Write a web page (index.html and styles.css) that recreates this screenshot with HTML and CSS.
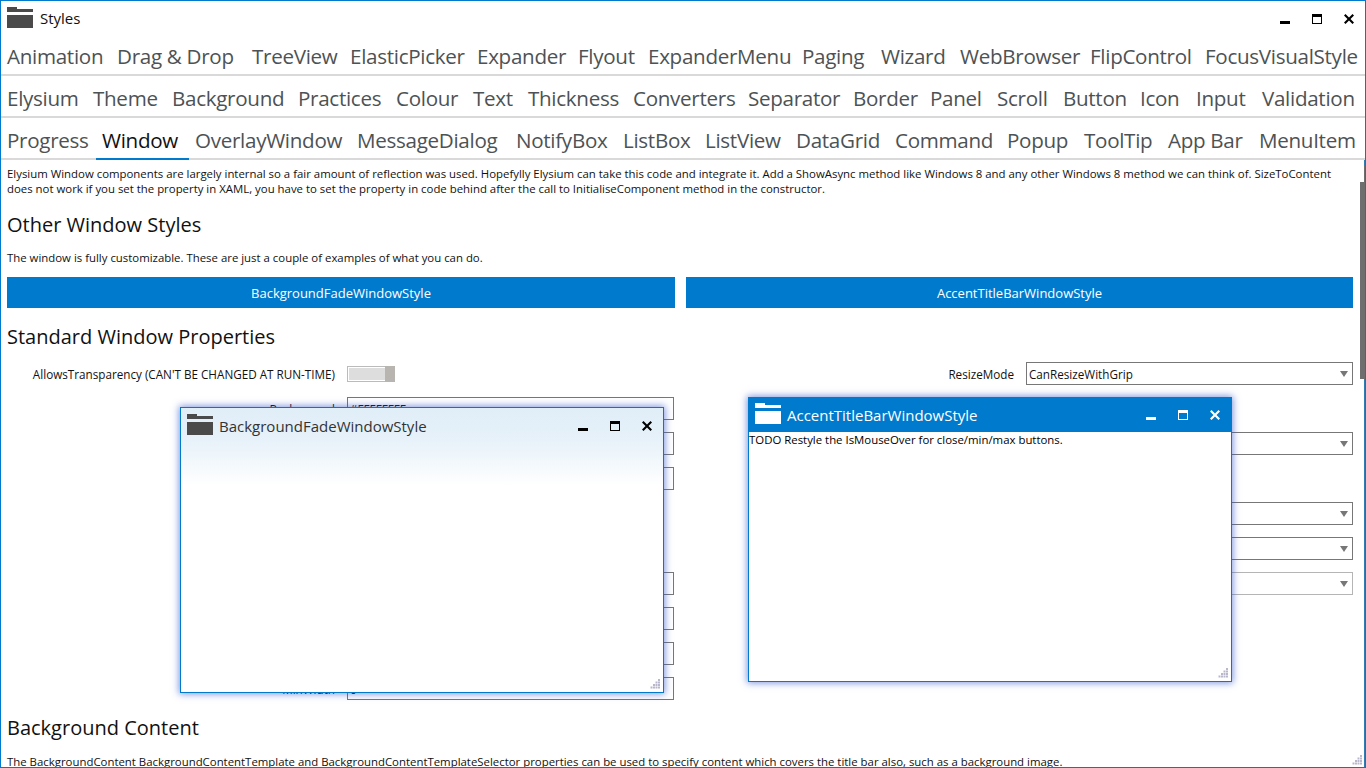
FILE: index.html
```html
<!DOCTYPE html>
<html lang="en">
  <head>
    <meta charset="utf-8">
    <title>Styles</title>
    <link rel="stylesheet" href="styles.css">
  </head>
  <body>
    <svg class="defs">
      <symbol id="folder" viewBox="0 0 26 21"><path d="M0 0h10v2h16v3H0zM0 8h26v13H0z"/></symbol>
      <symbol id="min" viewBox="0 0 10 10"><path d="M0 7h10v3H0z"/></symbol>
      <symbol id="max" viewBox="0 0 10 10"><path d="M0 0h10v10H0zM1 3v6h8V3z" fill-rule="evenodd"/></symbol>
      <symbol id="close" viewBox="0 0 10 10"><path d="M0 1.500L1.500 0 5 3.500 8.500 0 10 1.500 6.500 5 10 8.500 8.500 10 5 6.500 1.500 10 0 8.500 3.500 5z"/></symbol>
      <symbol id="grip" viewBox="0 0 10 10"><path d="M8 0h2v2H8zM8 2.500h2v2H8zM5.500 2.500h2v2h-2zM8 5h2v2H8zM5.500 5h2v2h-2zM3 5h2v2H3zM8 7.500h2v2H8zM5.500 7.500h2v2h-2zM3 7.500h2v2H3zM.5 7.500h2v2h-2z"/></symbol>
    </svg>

    <div class="app">
      <div class="titlebar">
        <svg class="folder"><use href="#folder"/></svg>
        <span class="title">Styles</span>
        <div class="winbtns">
          <svg><use href="#min"/></svg>
          <svg><use href="#max"/></svg>
          <svg><use href="#close"/></svg>
        </div>
      </div>

      <div class="tabs tabs1">
        <a>Animation</a><a>Drag &amp; Drop</a><a>TreeView</a><a>ElasticPicker</a><a>Expander</a><a>Flyout</a><a>ExpanderMenu</a><a>Paging</a><a>Wizard</a><a>WebBrowser</a><a>FlipControl</a><a>FocusVisualStyle</a>
      </div>
      <div class="tabs tabs2">
        <a>Elysium</a><a>Theme</a><a>Background</a><a>Practices</a><a>Colour</a><a>Text</a><a>Thickness</a><a>Converters</a><a>Separator</a><a>Border</a><a>Panel</a><a>Scroll</a><a>Button</a><a>Icon</a><a>Input</a><a>Validation</a>
      </div>
      <div class="tabs tabs3">
        <a>Progress</a><a class="active">Window</a><a>OverlayWindow</a><a>MessageDialog</a><a>NotifyBox</a><a>ListBox</a><a>ListView</a><a>DataGrid</a><a>Command</a><a>Popup</a><a>ToolTip</a><a>App Bar</a><a>MenuItem</a>
      </div>

      <div class="main">
        <div class="content">
          <p class="intro">Elysium Window components are largely internal so a fair amount of reflection was used. Hopefylly Elysium can take this code and integrate it. Add a ShowAsync method like Windows 8 and any other Windows 8 method we can think of. SizeToContent does not work if you set the property in XAML, you have to set the property in code behind after the call to InitialiseComponent method in the constructor.</p>

          <h2>Other Window Styles</h2>
          <p class="line">The window is fully customizable. These are just a couple of examples of what you can do.</p>
          <div class="btnrow">
            <button>BackgroundFadeWindowStyle</button>
            <button>AccentTitleBarWindowStyle</button>
          </div>

          <h2 class="props">Standard Window Properties</h2>
          <div class="form">
            <div class="col">
              <div class="row"><label>AllowsTransparency (CAN'T BE CHANGED AT RUN-TIME)</label><div class="toggle"><span class="thumb"></span></div></div>
              <div class="row"><label>Background</label><div class="box">#FFFFFFFF</div></div>
              <div class="row"><label></label><div class="box"></div></div>
              <div class="row"><label></label><div class="box"></div></div>
              <div class="row"></div>
              <div class="row"></div>
              <div class="row"><label></label><div class="box"></div></div>
              <div class="row"><label></label><div class="box"></div></div>
              <div class="row"><label></label><div class="box"></div></div>
              <div class="row"><label>MinWidth</label><div class="box">0</div></div>
            </div>
            <div class="col">
              <div class="row"><label>ResizeMode</label><div class="box select">CanResizeWithGrip</div></div>
              <div class="row"></div>
              <div class="row"><label></label><div class="box select"></div></div>
              <div class="row"></div>
              <div class="row"><label></label><div class="box select"></div></div>
              <div class="row"><label></label><div class="box select"></div></div>
              <div class="row"><label></label><div class="box select off"></div></div>
            </div>
          </div>

          <h2 class="bg">Background Content</h2>
          <p class="line last">The BackgroundContent BackgroundContentTemplate and BackgroundContentTemplateSelector properties can be used to specify content which covers the title bar also, such as a background image.</p>
        </div>
        <div class="scrollbar"><span class="sthumb"></span></div>
      </div>

      <svg class="grip maingrip"><use href="#grip"/></svg>

      <!-- floating demo windows -->
      <div class="win fade">
        <div class="wintitle">
          <svg class="folder"><use href="#folder"/></svg>
          <span>BackgroundFadeWindowStyle</span>
          <div class="winbtns">
            <svg><use href="#min"/></svg>
            <svg><use href="#max"/></svg>
            <svg><use href="#close"/></svg>
          </div>
        </div>
        <svg class="grip"><use href="#grip"/></svg>
      </div>

      <div class="win accent">
        <div class="wintitle">
          <svg class="folder"><use href="#folder"/></svg>
          <span>AccentTitleBarWindowStyle</span>
          <div class="winbtns">
            <svg><use href="#min"/></svg>
            <svg><use href="#max"/></svg>
            <svg><use href="#close"/></svg>
          </div>
        </div>
        <p class="todo">TODO Restyle the IsMouseOver for close/min/max buttons.</p>
        <svg class="grip"><use href="#grip"/></svg>
      </div>
    </div>
  </body>
</html>
```

FILE: styles.css
```css
* {
  box-sizing: border-box;
}

html, body {
  margin: 0;
  height: 100%;
  overflow: hidden;
}

body {
  font-family: "Open Sans", "Noto Sans", sans-serif;
  font-size: 11.4px;
  color: #111;
  background: #fff;
}

.defs {
  display: none;
}

.app {
  position: relative;
  height: 768px;
  border: 1px solid #007acc;
  display: flex;
  flex-direction: column;
  overflow: hidden;
}

/* title bar */
.titlebar {
  height: 35px;
  flex: none;
  display: flex;
  align-items: center;
  padding: 0 11px 0 6px;
}

.folder {
  width: 26px;
  height: 21px;
  fill: #4a4a4a;
  margin-top: -2px;
}

.title {
  margin-left: 7px;
  font-size: 15px;
  margin-top: -1px;
}

.winbtns {
  margin-left: auto;
  display: flex;
  gap: 22px;
  fill: #000;
}

.winbtns svg {
  width: 10px;
  height: 10px;
}

/* tab rows */
.tabs {
  height: 42px;
  flex: none;
  display: grid;
  padding-left: 6px;
  border-bottom: 2px solid #d9d9d9;
  font-size: 20.6px;
  letter-spacing: -0.3px;
  color: #4d5254;
  white-space: nowrap;
}

.tabs1 {
  height: 40px;
  grid-template-columns: 110px 135px 98px 127px 101px 70px 154px 79px 79px 130px 115px 151px;
}

.tabs2 {
  grid-template-columns: 86px 79px 126px 98px 77px 55px 105px 115px 105px 77px 67px 66px 77px 56px 66px 90px;
}

.tabs3 {
  grid-template-columns: 95px 93px 162px 159px 107px 82px 91px 99px 112px 77px 84px 91px 100px;
}

.tabs a {
  line-height: 44px;
  height: 42px;
}

.tabs1 a {
  line-height: 40px;
  height: 40px;
}

.tabs a.active {
  color: #111;
  margin-left: -6px;
  margin-right: 6px;
  padding-left: 6px;
  border-bottom: 2px solid #007acc;
}

/* content */
.main {
  flex: 1;
  min-height: 0;
  display: flex;
}

.content {
  flex: 1;
  min-width: 0;
  padding: 6px 6px 0;
  overflow: hidden;
}

.intro {
  margin: 0;
  line-height: 15px;
  width: 1340px;
}

h2 {
  margin: 0;
  font-size: 20px;
  font-weight: 400;
  line-height: 26px;
  color: #111;
}

.content h2 {
  margin-top: 16px;
}

.line {
  margin: 12px 0 0;
  line-height: 15px;
  white-space: nowrap;
}

.line.last {
  margin-top: 13px;
}

.btnrow {
  display: grid;
  grid-template-columns: 668px 667px;
  gap: 11px;
  margin-top: 12px;
}

.btnrow button {
  height: 31px;
  border: 0;
  background: #007acc;
  color: #fff;
  font-family: inherit;
  font-size: 13px;
}

.content .props {
  margin-top: 16px;
}

.form {
  display: grid;
  grid-template-columns: 679px 667px;
  margin-top: 12px;
}

.row {
  display: flex;
  align-items: center;
  height: 35px;
  padding-bottom: 12px;
}

.row label {
  width: 328px;
  text-align: right;
  white-space: nowrap;
  flex: none;
  font-size: 11.7px;
}

.box {
  height: 23px;
  width: 327px;
  margin-left: 12px;
  border: 1px solid #777;
  padding: 0 2px;
  line-height: 22px;
  font-size: 11.7px;
  position: relative;
}

.select::after {
  content: "";
  position: absolute;
  right: 4px;
  top: 8px;
  border: 4.500px solid transparent;
  border-top: 6px solid #777;
  border-bottom: 0;
}

.select.off {
  border-color: #b5b5b5;
}

.toggle {
  width: 48px;
  height: 16px;
  margin-left: 12px;
  background: #ddd;
  border: 1px solid #bbb;
  box-shadow: inset 0 0 0 1px #fff;
  position: relative;
}

.thumb {
  position: absolute;
  right: -1px;
  top: -1px;
  width: 10px;
  height: 16px;
  background: #b8b4b0;
}

.content .bg {
  margin-top: 3px;
}

.scrollbar {
  width: 7px;
  flex: none;
  position: relative;
  border-right: 1px solid #2f7db5;
}

.sthumb {
  position: absolute;
  right: -1px;
  top: 22px;
  width: 5px;
  height: 197px;
  background: #6e6e6e;
}

.sthumb::before {
  content: "";
  position: absolute;
  right: 0;
  top: -16px;
  width: 1px;
  height: 16px;
  background: #6e6e6e;
}

/* floating windows */
.win {
  position: absolute;
  width: 484px;
  height: 286px;
  background: #fff;
  border: 1px solid #007acc;
  box-shadow: 0 0 7px 1px rgba(40, 80, 200, .6);
}

.fade {
  left: 179px;
  top: 406px;
  background: linear-gradient(#e0eef8, #e6f1f9 30px, #fff 78px);
}

.accent {
  left: 747px;
  top: 396px;
  height: 285px;
}

.wintitle {
  height: 35px;
  display: flex;
  align-items: center;
  padding: 0 11px 0 6px;
  font-size: 15px;
  color: #333;
}

.wintitle span {
  margin-left: 6px;
}

.accent .wintitle {
  background: #007acc;
  color: #fff;
  margin: -1px -1px 0;
  padding: 0 12px 0 7px;
}

.accent .folder,
.accent .winbtns {
  fill: #fff;
}

.todo {
  margin: 0;
  line-height: 16px;
  color: #000;
}

.grip {
  position: absolute;
  right: 3px;
  bottom: 3px;
  width: 10px;
  height: 10px;
  fill: #b9b7cc;
}

.maingrip {
  right: 3px;
  bottom: 2px;
}
```
